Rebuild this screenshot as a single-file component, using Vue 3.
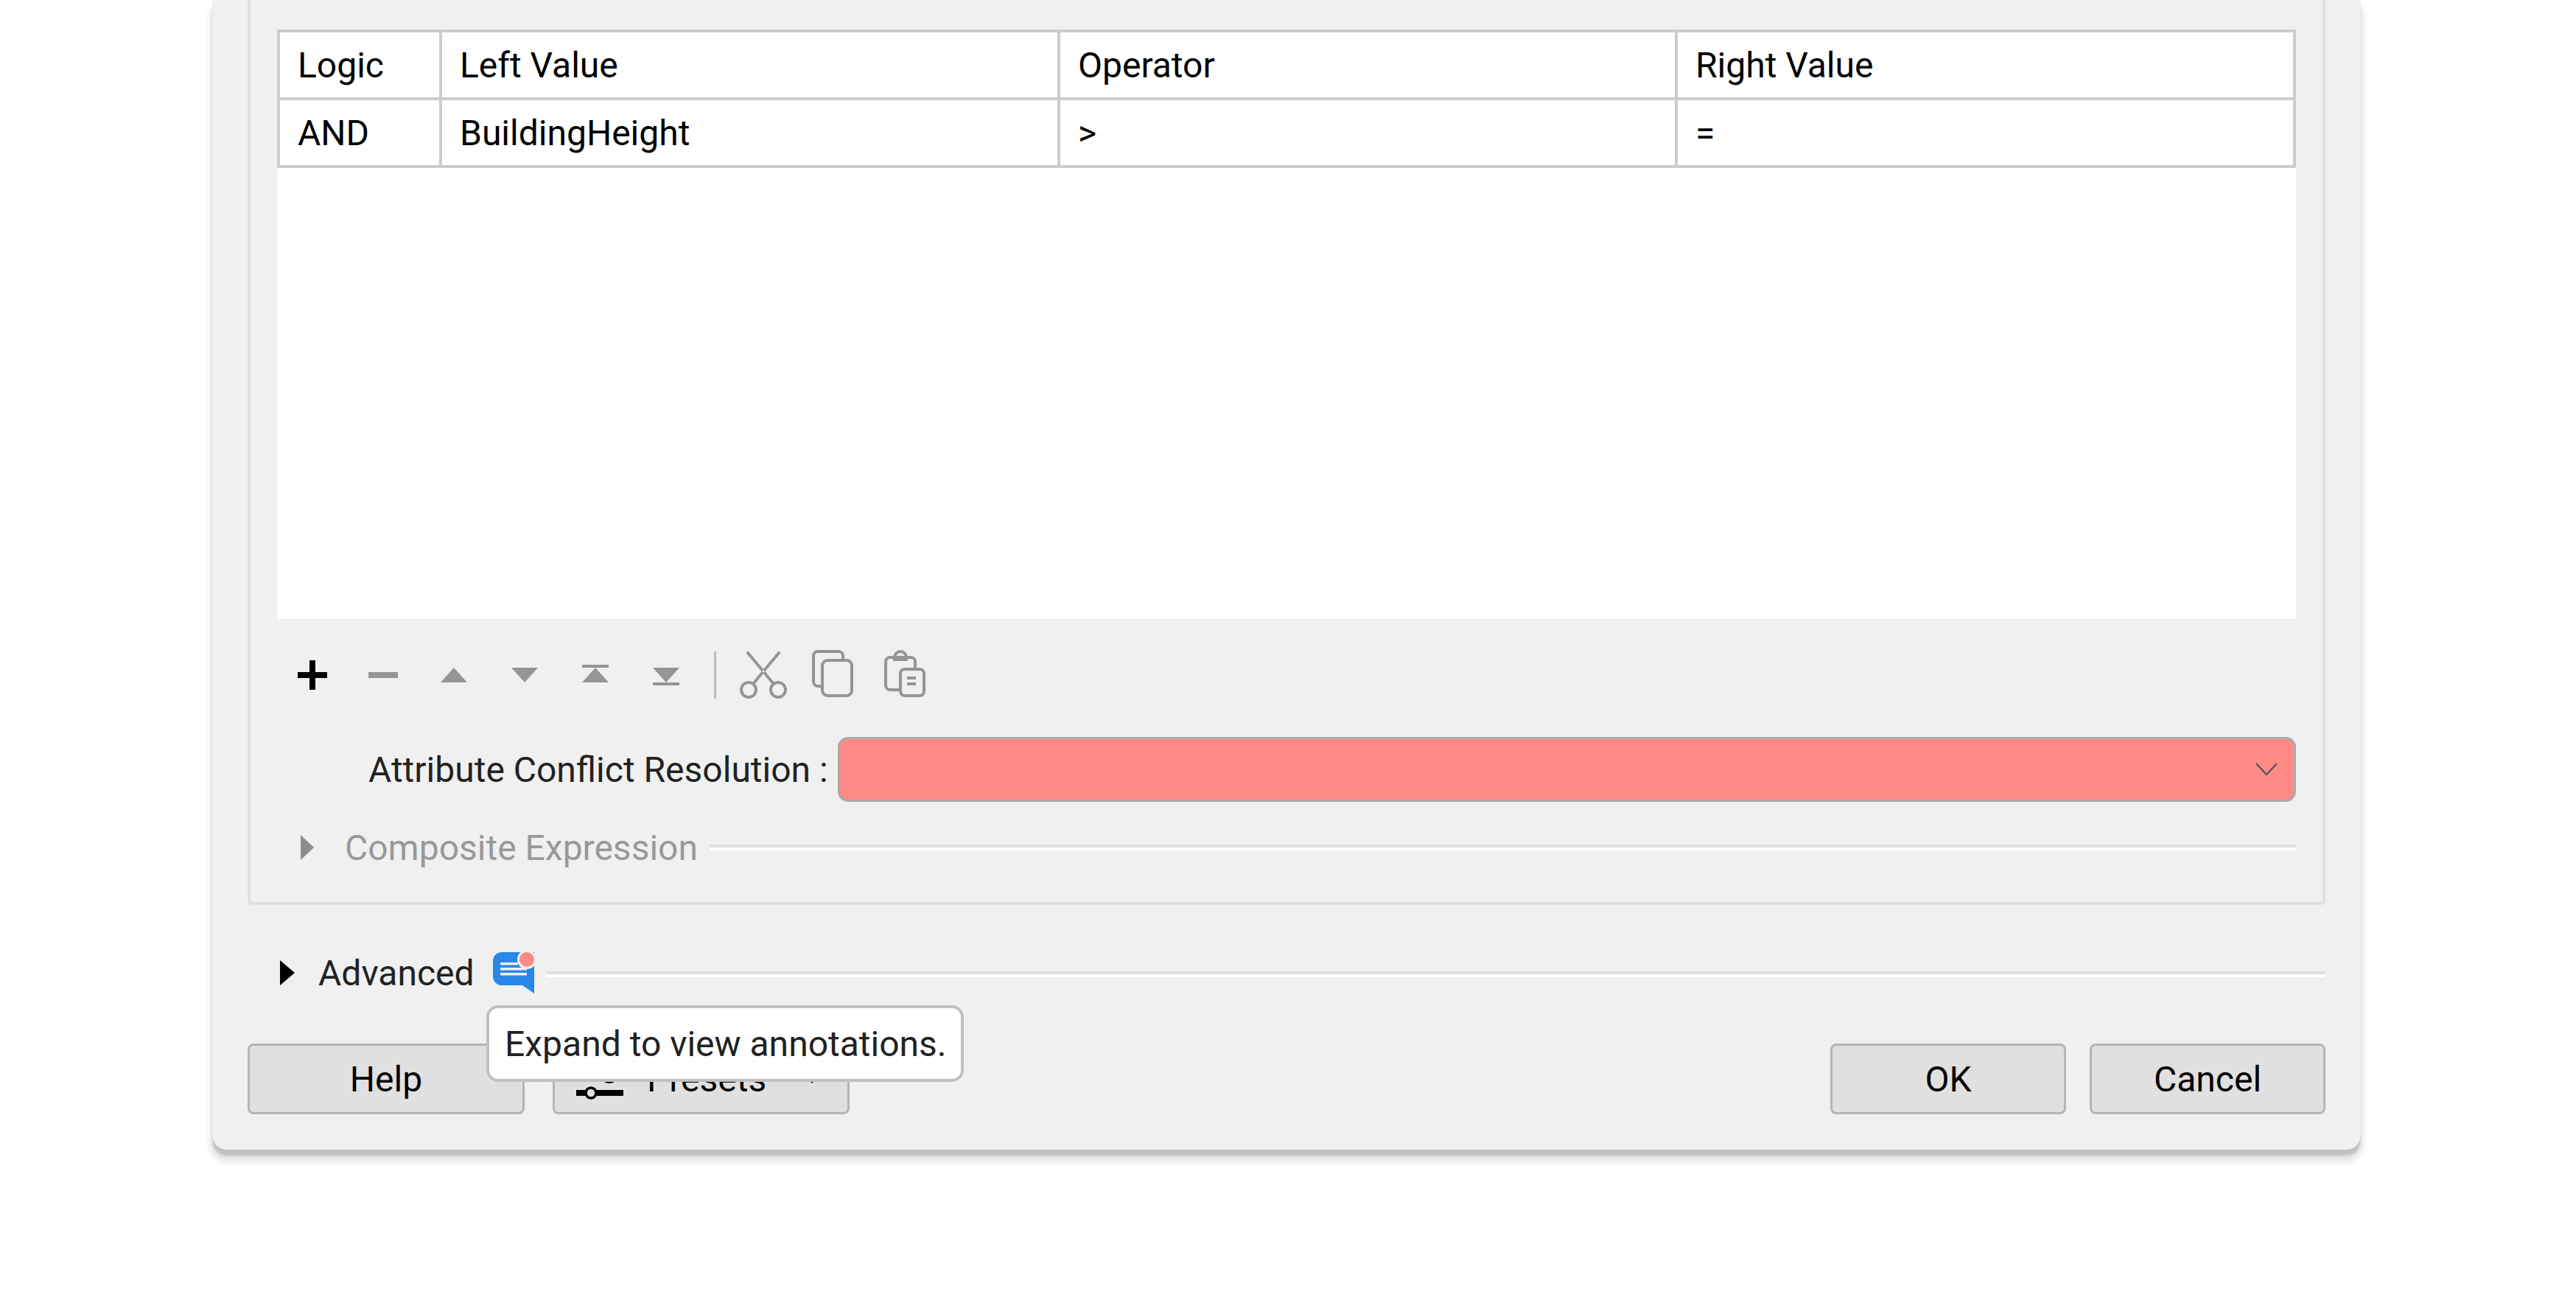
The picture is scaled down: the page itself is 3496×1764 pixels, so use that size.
<script setup>
const rows = [
  ['Logic', 'Left Value', 'Operator', 'Right Value'],
  ['AND', 'BuildingHeight', '>', '=']
]
</script>

<template>
  <div class="page">
    <div class="dialog">
      <div class="group">
        <div class="table-area">
          <div class="grid">
            <template v-for="(row, r) in rows" :key="r">
              <div v-for="(cell, c) in row" :key="c" class="cell">{{ cell }}</div>
            </template>
          </div>
        </div>

        <div class="toolbar">
          <svg class="i40" viewBox="0 0 40 40"><path d="M16 0h8v16h16v8H24v16h-8V24H0v-8h16z" fill="#000"/></svg>
          <svg class="i40 g56" viewBox="0 0 40 40"><rect y="16" width="40" height="8" fill="#959595"/></svg>
          <svg class="i36 g58" viewBox="0 0 36 40"><path d="M18 10 36 30H0z" fill="#959595"/></svg>
          <svg class="i36 g60" viewBox="0 0 36 40"><path d="M0 10h36L18 30z" fill="#959595"/></svg>
          <svg class="i36 g60" viewBox="0 0 36 40"><path d="M0 6h36v4H0zM18 10l18 20H0z" fill="#959595"/></svg>
          <svg class="i36 g60" viewBox="0 0 36 40"><path d="M0 10h36L18 30zM0 30h36v4H0z" fill="#959595"/></svg>
          <div class="sep"></div>
          <svg class="scissors" viewBox="0 0 64 64" fill="none" stroke="#959595" stroke-width="4" stroke-linecap="round">
            <path d="M11 2 32 27 45 43M53 2 32 27 19 43"/>
            <circle cx="12" cy="52" r="10"/>
            <circle cx="52" cy="52" r="10"/>
            <circle cx="32" cy="27" r="1.5" fill="#f0f0f0" stroke="none"/>
          </svg>
          <svg class="copy" viewBox="0 0 56 64" fill="none" stroke="#959595" stroke-width="4">
            <path d="M13 49H8a6 6 0 0 1-6-6V8a6 6 0 0 1 6-6h28a6 6 0 0 1 6 6v6"/>
            <rect x="14" y="14" width="40" height="48" rx="7"/>
          </svg>
          <svg class="paste" viewBox="0 0 56 64" fill="none" stroke="#959595" stroke-width="4">
            <path d="M21 54H8a6 6 0 0 1-6-6V16a6 6 0 0 1 6-6h28a6 6 0 0 1 6 6v9"/>
            <path d="M14 13V10a8 8 0 0 1 16 0v3z"/>
            <rect x="22" y="26" width="32" height="36" rx="6"/>
            <path d="M31 38h12M31 46h12"/>
          </svg>
        </div>

        <div class="field">
          <span class="field-label">Attribute Conflict Resolution :</span>
          <div class="select">
            <svg class="chev" viewBox="0 0 30 18" fill="none" stroke="#5a5a5a" stroke-width="2.5"><path d="M1 1 15 16 29 1"/></svg>
          </div>
        </div>

        <div class="section composite">
          <svg class="tri-c" viewBox="0 0 18 34"><path d="M0 0 18 17 0 34z" fill="#8e8e8e"/></svg>
          <span class="composite-text">Composite Expression</span>
          <div class="rule"></div>
        </div>
      </div>

      <div class="section advanced">
        <svg class="tri-a" viewBox="0 0 20 34"><path d="M0 0 20 17 0 34z" fill="#000"/></svg>
        <span class="advanced-text">Advanced</span>
        <svg class="note" viewBox="0 0 56 56">
          <path d="M12 0H56V56L40 45H12A12 12 0 0 1 0 33V12A12 12 0 0 1 12 0z" fill="#2887e8"/>
          <circle cx="46" cy="10" r="13" fill="#f0f0f0"/>
          <circle cx="46" cy="10" r="10" fill="#ff8a86"/>
          <path d="M10 15.7H34M10 22.7H46M10 29.7H46" stroke="#f0f0f0" stroke-width="3.5"/>
        </svg>
        <div class="rule rule-low"></div>
      </div>

      <div class="buttons">
        <button class="btn help">Help</button>
        <button class="btn presets">
          <svg class="preset-icon" viewBox="0 0 64 64">
            <path d="M0 16h64v8H0zM0 42h64v8H0z" fill="#000"/>
            <circle cx="45" cy="21" r="10" fill="#e0e0e0" stroke="#000" stroke-width="4"/>
            <circle cx="20" cy="46" r="7" fill="#e0e0e0" stroke="#000" stroke-width="3.5"/>
          </svg>
          <span class="preset-text">Presets</span>
          <svg class="preset-arrow" viewBox="0 0 20 12"><path d="M0 0h20L10 12z" fill="#000"/></svg>
        </button>
        <div class="spacer"></div>
        <button class="btn ok">OK</button>
        <button class="btn cancel">Cancel</button>
      </div>

      <div class="tooltip">Expand to view annotations.</div>
    </div>
  </div>
</template>

<style>
html, body { margin: 0; background: #fff; }
</style>

<style scoped>
.page {
  width: 3496px;
  height: 1764px;
  overflow: hidden;
  background: #fff;
  font-family: Roboto, "Liberation Sans", sans-serif;
  font-size: 48px;
  color: #000;
}
.dialog {
  position: relative;
  box-sizing: border-box;
  width: 2916px;
  height: 1560px;
  margin-left: 288px;
  padding: 0 48px;
  background: #f0f0f0;
  border-radius: 0 0 20px 20px;
  box-shadow: 0 8px 3px rgba(0, 0, 0, 0.14), 0 14px 10px 2px rgba(0, 0, 0, 0.12);
}
.group {
  box-sizing: border-box;
  height: 1228px;
  padding: 40px 36px 0;
  border: 4px solid #e0e0e0;
  border-top: none;
  border-radius: 0 0 6px 6px;
}
.table-area {
  height: 800px;
  background: #fff;
}
.grid {
  display: grid;
  grid-template-columns: 216px 835px 834px 1fr;
  grid-auto-rows: 88px;
  gap: 4px;
  box-sizing: border-box;
  width: 2740px;
  border: 4px solid #ccc;
  background: #ccc;
}
.cell {
  display: flex;
  align-items: center;
  padding-left: 24px;
  background: #fff;
  color: #000;
}
.toolbar {
  display: flex;
  align-items: center;
  height: 64px;
  margin-top: 44px;
  padding-left: 28px;
}
.i40 { width: 40px; height: 40px; flex: none; }
.i36 { width: 36px; height: 40px; flex: none; }
.g56 { margin-left: 56px; }
.g58 { margin-left: 58px; }
.g60 { margin-left: 60px; }
.sep {
  width: 3px;
  height: 64px;
  margin-left: 47px;
  background: #bbb;
}
.scissors { width: 64px; height: 64px; margin-left: 32px; flex: none; }
.copy { width: 56px; height: 64px; margin-left: 34px; margin-top: -4px; flex: none; }
.paste { width: 56px; height: 64px; margin-left: 42px; margin-top: -4px; flex: none; }
.field {
  display: flex;
  align-items: center;
  height: 88px;
  margin-top: 52px;
  padding-left: 124px;
}
.field-label {
  flex: none;
  width: 637px;
  color: #222;
}
.select {
  flex: 1;
  box-sizing: border-box;
  height: 88px;
  display: flex;
  align-items: center;
  justify-content: flex-end;
  padding-right: 22px;
  background: #ff8a86;
  border: 3px solid #aaa;
  border-radius: 14px;
}
.chev { width: 30px; height: 18px; }
.section {
  display: flex;
  align-items: center;
}
.composite {
  margin-top: 34px;
  padding-left: 32px;
  height: 56px;
}
.tri-c { width: 18px; height: 34px; flex: none; }
.composite-text {
  margin-left: 42px;
  color: #999;
}
.rule {
  flex: 1;
  height: 8px;
  margin-left: 16px;
  box-sizing: border-box;
  border-top: 4px solid #e0e0e0;
  border-bottom: 4px solid #fff;
}
.rule-low { margin-top: 4px; }
.advanced {
  margin-top: 64px;
  padding-left: 44px;
  height: 56px;
}
.tri-a { width: 20px; height: 34px; flex: none; }
.advanced-text {
  margin-left: 32px;
  color: #222;
}
.note {
  width: 56px;
  height: 56px;
  margin-left: 25px;
  flex: none;
}
.buttons {
  display: flex;
  margin-top: 68px;
}
.btn {
  box-sizing: border-box;
  height: 96px;
  padding: 0;
  background: #e0e0e0;
  border: 3px solid #b5b5b5;
  border-radius: 8px;
  font: inherit;
  color: #000;
}
.help { width: 376px; }
.presets {
  display: flex;
  align-items: center;
  width: 403px;
  margin-left: 38px;
  padding-left: 29px;
}
.preset-icon { width: 64px; height: 64px; margin-top: 10px; flex: none; }
.preset-text { margin-left: 32px; }
.preset-arrow { width: 20px; height: 12px; margin-left: 52px; flex: none; }
.spacer { flex: 1; }
.ok { width: 320px; }
.cancel { width: 320px; margin-left: 32px; }
.tooltip {
  position: absolute;
  left: 372px;
  top: 1364px;
  box-sizing: border-box;
  width: 648px;
  height: 104px;
  display: flex;
  align-items: center;
  padding-left: 21px;
  background: #fff;
  border: 4px solid #c0c0c0;
  border-radius: 16px;
  color: #222;
  white-space: nowrap;
}
</style>
